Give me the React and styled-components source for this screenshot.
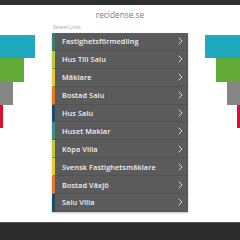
import React from "react"
import styled, { createGlobalStyle } from "styled-components"

const links = [
  { label: "Fastighetsförmedling", color: "#3a7d72" },
  { label: "Hus Till Salu", color: "#b8cc3a" },
  { label: "Mäklare", color: "#e9c930" },
  { label: "Bostad Salu", color: "#e0782a" },
  { label: "Hus Salu", color: "#1f4a66" },
  { label: "Huset Maklar", color: "#3a8f8c" },
  { label: "Köpa Villa", color: "#b8cc3a" },
  { label: "Svensk Fastighetsmäklare", color: "#e9c930" },
  { label: "Bostad Växjö", color: "#e0782a" },
  { label: "Salu Villa", color: "#1f4a66" },
]

const bars = [
  { color: "#1fa9bf", width: 35 },
  { color: "#62ab36", width: 24 },
  { color: "#858585", width: 13 },
  { color: "#d8102e", width: 3 },
]

const Global = createGlobalStyle`
  body {
    margin: 0;
    background: #fff;
    font-family: "Open Sans", "Liberation Sans", sans-serif;
  }
`

const Page = styled.div`
  width: 240px;
  height: 240px;
  overflow: hidden;
  display: flex;
  flex-direction: column;
`

const TopBar = styled.div`
  height: 5px;
  background: #2f2f2f;
`

const Main = styled.div`
  display: flex;
  height: 217px;
`

const Side = styled.div`
  width: 52px;
  padding-top: 30px;
  display: flex;
  flex-direction: column;
  align-items: ${(p) => (p.$right ? "flex-end" : "flex-start")};
`

const Bar = styled.div`
  height: 23.3px;
  background: ${(p) => p.$color};
`

const Center = styled.div`
  width: 136px;
  display: flex;
  flex-direction: column;
`

const Title = styled.div`
  height: 18px;
  line-height: 20px;
  text-align: center;
  font-size: 8.3px;
  color: #7a7a7a;
`

const Related = styled.div`
  height: 10px;
  line-height: 9px;
  font-size: 4.5px;
  color: #aaa;
  padding-left: 1px;
`

const List = styled.div`
  background: #5b5b5b;
  box-shadow: 0 1px 2px rgba(0, 0, 0, 0.25);
`

const Row = styled.div`
  height: 17.9px;
  display: flex;
  align-items: center;
  border-left: 3px solid ${(p) => p.$color};
  border-bottom: 1px solid #535353;
  box-sizing: border-box;
  padding: 0 5px 0 7px;
  color: #f2f2f2;
  font-size: 7.3px;
  font-weight: 600;
  letter-spacing: 0.1px;
`

const Label = styled.span`
  flex: 1;
  white-space: nowrap;
`

const Footer = styled.div`
  flex: 1;
  background: #2c2c2c;
  border-top: 1px solid #555;
`

const Chevron = () => (
  <svg width="5" height="8" viewBox="0 0 5 8">
    <polyline points="0.7,0.7 4,4 0.7,7.3" fill="none" stroke="#e8e8e8" strokeWidth="0.9" />
  </svg>
)

export default function App() {
  return (
    <Page>
      <Global />
      <TopBar />
      <Main>
        <Side>
          {bars.map((b) => (
            <Bar key={b.color} $color={b.color} style={{ width: b.width }} />
          ))}
        </Side>
        <Center>
          <Title>recidense.se</Title>
          <Related>Related Links</Related>
          <List>
            {links.map((l) => (
              <Row key={l.label} $color={l.color}>
                <Label>{l.label}</Label>
                <Chevron />
              </Row>
            ))}
          </List>
        </Center>
        <Side $right>
          {bars.map((b) => (
            <Bar key={b.color} $color={b.color} style={{ width: b.width }} />
          ))}
        </Side>
      </Main>
      <Footer />
    </Page>
  )
}
